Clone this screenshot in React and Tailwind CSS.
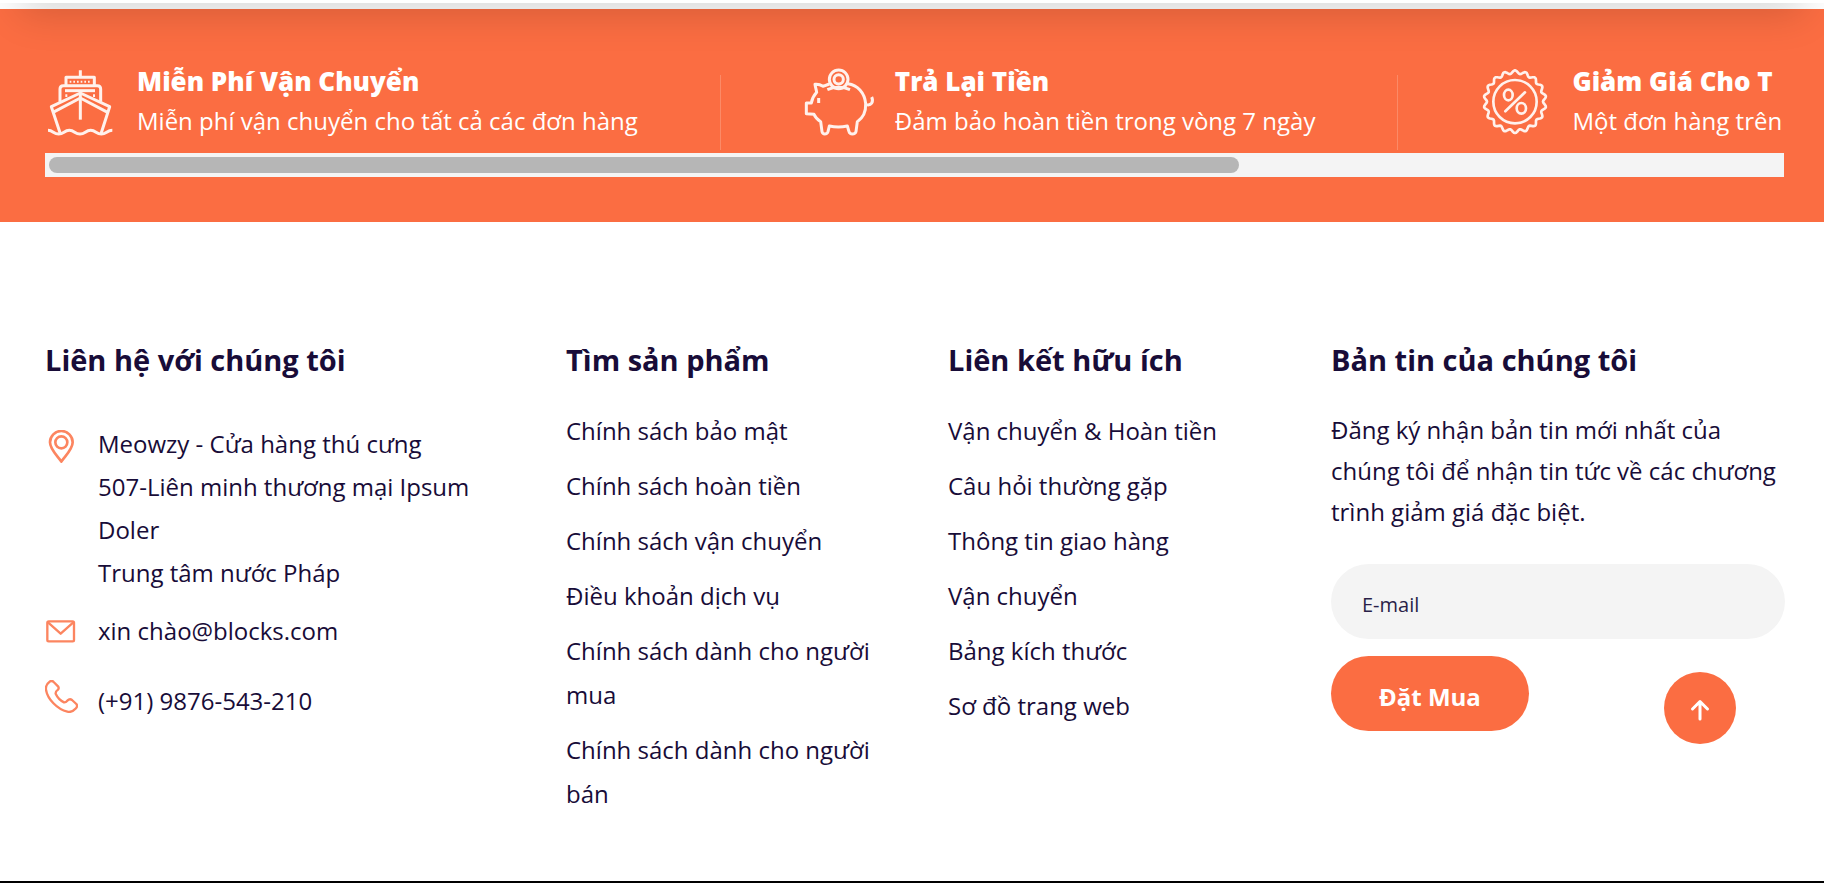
import React, { useState } from "react";

const productLinks = [
  "Chính sách bảo mật",
  "Chính sách hoàn tiền",
  "Chính sách vận chuyển",
  "Điều khoản dịch vụ",
  "Chính sách dành cho người mua",
  "Chính sách dành cho người bán",
];

const usefulLinks = [
  "Vận chuyển & Hoàn tiền",
  "Câu hỏi thường gặp",
  "Thông tin giao hàng",
  "Vận chuyển",
  "Bảng kích thước",
  "Sơ đồ trang web",
];

function ShipIcon() {
  return (
    <svg viewBox="45 39 210 210" className="size-[70px] shrink-0 overflow-visible" fill="none" stroke="currentColor" strokeWidth="9" strokeLinejoin="round" aria-hidden="true">
      <path d="M151 46V66M108 92V67H193V92" />
      <path d="M90 140V102q0-10 10-10H202q10 0 10 10V140" />
      <path d="M105 107H195" />
      <path d="M109 118V126M192 118V126" strokeWidth="6" />
      <path d="M119 80H184" strokeDasharray="5 6" strokeWidth="6" />
      <path d="M91 236L64 155L151 114L239 155L213 236" />
      <path d="M69 172L151 129L233 172" />
      <path d="M151 116V194" />
      <path d="M54 226c16 0 16 11 32 11s16-11 32-11 16 11 32 11 16-11 32-11 16 11 32 11 16-11 33-11" />
    </svg>
  );
}

function PiggyIcon() {
  return (
    <svg viewBox="33 39 210 210" className="size-[70px] shrink-0 overflow-visible" fill="none" stroke="currentColor" strokeWidth="9" strokeLinejoin="round" aria-hidden="true">
      <circle cx="140" cy="73" r="28" />
      <circle cx="140" cy="73" r="14" />
      <path d="M106 104q34-14 68 0" />
      <path d="M112 87L93 94C85 89 76 87 69 88C70 96 73 104 74 112C65 122 60 132 58 144H43V176L66 178C70 187 78 195 86 200L90 230Q92 237 98 237Q106 237 108 230L112 213Q139 219 166 213L171 230Q173 237 181 237Q190 237 192 230L196 200C214 188 222 170 221 146C218 112 196 90 168 86" />
      <path d="M222 149C238 153 246 141 239 126" />
      <path d="M80 129V144" />
    </svg>
  );
}

const badgeOutline =
  Array.from({ length: 180 }, (_, i) => {
    const a = (i * Math.PI) / 90;
    const r = 89 + 5 * Math.cos(18 * a);
    return `${i ? "L" : "M"}${(150 + r * Math.sin(a)).toFixed(1)} ${(140 - r * Math.cos(a)).toFixed(1)}`;
  }).join("") + "Z";

function DiscountIcon() {
  return (
    <svg viewBox="45 39 210 210" className="size-[70px] shrink-0 overflow-visible" fill="none" stroke="currentColor" strokeWidth="8" strokeLinejoin="round" strokeLinecap="round" aria-hidden="true">
      <path d={badgeOutline} />
      <circle cx="150" cy="140" r="65" />
      <ellipse cx="130" cy="120" rx="13" ry="16" />
      <ellipse cx="169" cy="160" rx="14" ry="16" />
      <path d="M121 169L180 112" />
    </svg>
  );
}

function PinIcon() {
  return (
    <svg viewBox="43 33 99 99" className="mt-2 size-[33px] shrink-0" fill="none" stroke="currentColor" strokeWidth="8" strokeLinejoin="round" aria-hidden="true">
      <path d="M92 128C82 112 58 92 58 70a34 34 0 0 1 68 0C126 92 102 112 92 128Z" />
      <circle cx="92" cy="70" r="18" />
    </svg>
  );
}

function MailIcon() {
  return (
    <svg viewBox="45 48 99 99" className="size-[33px] shrink-0" fill="none" stroke="currentColor" strokeWidth="7" strokeLinejoin="round" aria-hidden="true">
      <rect x="52" y="67" width="80" height="60" rx="4" />
      <path d="M54 70L92 104L130 70" />
    </svg>
  );
}

function PhoneIcon() {
  return (
    <svg viewBox="45 243 99 99" className="mt-px size-[33px] shrink-0" fill="none" stroke="currentColor" strokeWidth="7" strokeLinejoin="round" aria-hidden="true">
      <path d="M59 248Q66 243 71 249L84 262Q88 267 84 272Q76 278 77 284C82 295 92 305 102 310Q107 311 112 305Q119 298 126 303L139 315Q144 321 138 328C130 337 124 341 112 338C82 331 52 300 48 272Q46 257 59 248Z" />
    </svg>
  );
}

function Service({ icon, title, text }) {
  return (
    <div className="flex shrink-0 items-start gap-[22px] pt-2">
      <div className="pt-1.5 text-[#fff1ec]">{icon}</div>
      <div className="whitespace-nowrap">
        <h3 className="text-[26px] leading-[39px] font-extrabold">{title}</h3>
        <p className="text-2xl leading-[39px] font-medium">{text}</p>
      </div>
    </div>
  );
}

function Divider() {
  return <div className="mx-[82px] mb-[3px] h-[75px] w-px shrink-0 self-end bg-white/20" />;
}

function ServiceStrip() {
  const [offset, setOffset] = useState(0);
  return (
    <div>
      <div
        id="services"
        className="flex overflow-x-auto [scrollbar-width:none]"
        onScroll={(e) => setOffset((e.currentTarget.scrollLeft / e.currentTarget.scrollWidth) * 100)}
      >
        <div className="flex h-[99px] shrink-0">
          <Service icon={<ShipIcon />} title="Miễn Phí Vận Chuyển" text="Miễn phí vận chuyển cho tất cả các đơn hàng" />
          <Divider />
          <Service icon={<PiggyIcon />} title="Trả Lại Tiền" text="Đảm bảo hoàn tiền trong vòng 7 ngày" />
          <Divider />
          <div className="w-[1087px] shrink-0">
            <Service icon={<DiscountIcon />} title="Giảm Giá Cho T" text="Một đơn hàng trên" />
          </div>
        </div>
      </div>
      <div className="h-6 bg-[#f4f4f4] p-1">
        <div
          role="scrollbar"
          aria-controls="services"
          aria-orientation="horizontal"
          aria-valuenow={Math.round(offset)}
          className="h-4 w-[68.75%] rounded-full bg-[#b6b6b6]"
          style={{ marginLeft: `${offset}%` }}
        />
      </div>
    </div>
  );
}

function Heading({ children }) {
  return <h2 className="text-[29px] leading-11 font-bold">{children}</h2>;
}

function LinkColumn({ title, links }) {
  return (
    <nav className="pr-[60px]" aria-label={title}>
      <Heading>{title}</Heading>
      <ul className="mt-[27px] flex flex-col gap-[11px]">
        {links.map((label) => (
          <li key={label} className="leading-11">
            <a href="#">{label}</a>
          </li>
        ))}
      </ul>
    </nav>
  );
}

export default function App() {
  return (
    <div className="flow-root bg-white font-['Open_Sans','Noto_Sans',sans-serif] text-2xl text-[#180c38]">
      <header className="relative z-10 -mt-[97px] h-[100px] bg-white shadow-[0_30px_40px_-20px_rgba(0,0,0,0.16)]" />

      <section className="mt-1.5 bg-[#fb6d42] py-[45px] pr-10 pl-[45px] text-white">
        <ServiceStrip />
      </section>

      <footer className="grid grid-cols-[521fr_382fr_383fr_454fr] pt-[116px] pr-[39px] pb-[65px] pl-[45px]">
        <section className="pr-[60px]">
          <Heading>Liên hệ với chúng tôi</Heading>
          <address className="mt-10 flex flex-col not-italic">
            <div className="flex gap-5 leading-[43px]">
              <span className="text-[#fc8560]"><PinIcon /></span>
              <p>
                Meowzy - Cửa hàng thú cưng
                <br />
                507-Liên minh thương mại Ipsum Doler
                <br />
                Trung tâm nước Pháp
              </p>
            </div>
            <div className="mt-[15px] flex items-center gap-5 leading-11">
              <span className="text-[#fc8560]"><MailIcon /></span>
              <a href="#">xin chào@blocks.com</a>
            </div>
            <div className="mt-[26px] flex items-start gap-5 leading-11">
              <span className="text-[#fc8560]"><PhoneIcon /></span>
              <a href="#">(+91) 9876-543-210</a>
            </div>
          </address>
        </section>

        <LinkColumn title="Tìm sản phẩm" links={productLinks} />
        <LinkColumn title="Liên kết hữu ích" links={usefulLinks} />

        <section>
          <Heading>Bản tin của chúng tôi</Heading>
          <p className="mt-[27px] leading-[41px]">
            Đăng ký nhận bản tin mới nhất của chúng tôi để nhận tin tức về các chương trình giảm giá đặc biệt.
          </p>
          <form className="mt-8 flex flex-col items-start gap-[17px]" onSubmit={(e) => e.preventDefault()}>
            <input
              type="email"
              aria-label="E-mail"
              placeholder="E-mail"
              className="h-[75px] w-full rounded-full bg-[#f4f4f4] px-[31px] pt-1.5 text-xl placeholder:text-[#2a1f48] placeholder:opacity-100"
            />
            <button type="submit" className="h-[75px] rounded-full bg-[#fb6d42] px-12 pt-1.5 font-bold text-white">
              Đặt Mua
            </button>
          </form>
        </section>
      </footer>

      <div className="h-0.5 bg-black" />

      <button
        type="button"
        aria-label="Lên đầu trang"
        className="fixed right-[88px] bottom-[139px] flex size-[72px] items-center justify-center rounded-full bg-[#fb6d42] pt-1 text-white"
      >
        <svg viewBox="0 0 20 22" className="h-[22px] w-5" fill="none" stroke="currentColor" strokeWidth="3" strokeLinecap="round" strokeLinejoin="round" aria-hidden="true">
          <path d="M10 20V2.500M2.500 10L10 2.500L17.500 10" />
        </svg>
      </button>
    </div>
  );
}
